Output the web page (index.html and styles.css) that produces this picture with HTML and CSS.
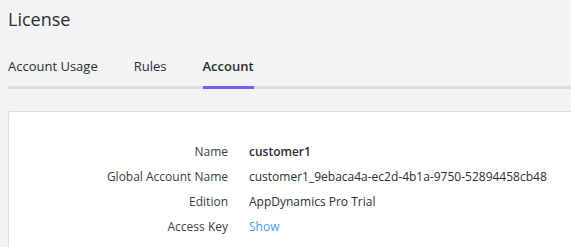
FILE: index.html
```html
<!DOCTYPE html>
<html>
<head>
<meta charset="utf-8">
<link rel="stylesheet" href="styles.css">
</head>
<body>
<div class="page">
  <h1 class="title">License</h1>
  <nav class="tabs">
    <a class="tab">Account Usage</a>
    <a class="tab">Rules</a>
    <a class="tab active">Account</a>
  </nav>
  <section class="card">
    <dl class="info">
      <dt>Name</dt><dd class="strong">customer1</dd>
      <dt>Global Account Name</dt><dd>customer1_9ebaca4a-ec2d-4b1a-9750-52894458cb48</dd>
      <dt>Edition</dt><dd>AppDynamics Pro Trial</dd>
      <dt>Access Key</dt><dd><a class="link">Show</a></dd>
    </dl>
  </section>
</div>
</body>
</html>
```

FILE: styles.css
```css
html, body {
  margin: 0;
  padding: 0;
  background: #f2f3f5;
  font-family: "Open Sans", "Noto Sans", sans-serif;
  color: #2b2e35;
  overflow: hidden;
}
.page {
  padding: 0 0 0 8px;
}
.title {
  margin: 0;
  padding-top: 5px;
  font-size: 18px;
  font-weight: 400;
  line-height: 28px;
}
.tabs {
  display: flex;
  margin-top: 24px;
  border-bottom: 3px solid #dcdde1;
}
.tab {
  font-size: 13px;
  line-height: 18px;
  padding-bottom: 11px;
  margin-bottom: -3px;
  border-bottom: 3px solid transparent;
  margin-right: 36px;
}
.tab.active {
  font-weight: 600;
  border-bottom-color: #7a5cf8;
}
.card {
  margin-top: 22px;
  background: #fff;
  border: 1px solid #dcdde1;
  border-right: none;
  border-radius: 3px 0 0 0;
  height: 200px;
}
.info {
  display: grid;
  grid-template-columns: 219px auto;
  column-gap: 21px;
  margin: 0;
  padding-top: 27px;
  font-size: 12px;
  line-height: 25px;
  white-space: nowrap;
}
.info dt {
  text-align: right;
  color: #3a3d44;
}
.info dd {
  margin: 0;
  color: #2b2e35;
}
.info dd.strong {
  font-weight: 600;
}
.link {
  color: #4a9ee8;
}
```
